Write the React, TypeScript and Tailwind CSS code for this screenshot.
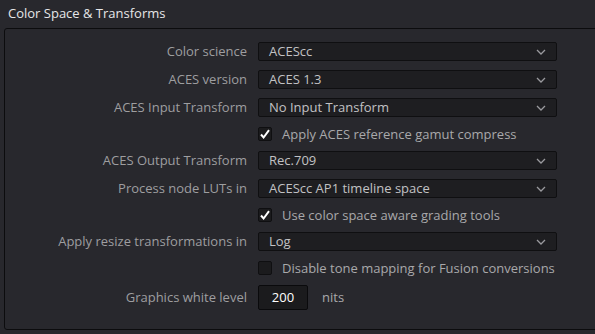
import React from 'react';

const font = { fontFamily: '"Open Sans", "Noto Sans", sans-serif' };

const Chevron = () => (
  <svg width="10" height="6" viewBox="0 0 10 6" className="shrink-0">
    <path d="M1 1 L5 5 L9 1" fill="none" stroke="#9a9a9e" strokeWidth="1.3" />
  </svg>
);

const Select = ({ value }: { value: string }) => (
  <div className="h-[19px] w-[299px] flex items-center justify-between pl-[10px] pr-[10px] bg-[#1e1e21] border border-[#0f0f11] rounded-[2px] text-[13px] text-[#c2c2c4] leading-none">
    <span>{value}</span>
    <Chevron />
  </div>
);

const Check = ({ checked, label }: { checked: boolean; label: string }) => (
  <div className="h-[16px] flex items-center gap-[10px] text-[13px] text-[#a9a9ab] leading-none">
    <div className="w-[14px] h-[14px] bg-[#1b1b1d] border border-[#0f0f11] rounded-[2px] flex items-center justify-center">
      {checked && (
        <svg width="12" height="12" viewBox="0 0 12 12">
          <path d="M2 6.5 L4.6 9.5 L10 2.2" fill="none" stroke="#ffffff" strokeWidth="2" />
        </svg>
      )}
    </div>
    <span>{label}</span>
  </div>
);

const Row = ({ label, children }: { label?: string; children: React.ReactNode }) => (
  <div className="grid grid-cols-[242px_1fr] gap-x-[11px] items-center">
    <div className="text-right text-[13px] text-[#9e9ea0] leading-none whitespace-nowrap">{label}</div>
    <div>{children}</div>
  </div>
);

export default function App() {
  return (
    <div className="w-[595px] h-[334px] bg-[#28282d] overflow-hidden" style={font}>
      <div className="h-[28px] pl-[8px] pt-[3px] text-[13px] text-[#e6e6e8] leading-[20px]">Color Space &amp; Transforms</div>
      <div className="ml-[4px] w-[620px] h-[302px] border border-[#0c0c0e] rounded-[3px] pt-[13px] flex flex-col gap-[9px]">
        <Row label="Color science"><Select value="ACEScc" /></Row>
        <Row label="ACES version"><Select value="ACES 1.3" /></Row>
        <Row label="ACES Input Transform"><Select value="No Input Transform" /></Row>
        <Row><Check checked label="Apply ACES reference gamut compress" /></Row>
        <Row label="ACES Output Transform"><Select value="Rec.709" /></Row>
        <Row label="Process node LUTs in"><Select value="ACEScc AP1 timeline space" /></Row>
        <Row><Check checked label="Use color space aware grading tools" /></Row>
        <Row label="Apply resize transformations in"><Select value="Log" /></Row>
        <Row><Check checked={false} label="Disable tone mapping for Fusion conversions" /></Row>
        <Row label="Graphics white level">
          <div className="flex items-center gap-[14px]">
            <div className="w-[50px] h-[25px] bg-[#1b1b1d] border border-[#0a0a0c] rounded-[2px] flex items-center justify-center text-[13px] text-white leading-none">200</div>
            <span className="text-[13px] text-[#a9a9ab] leading-none">nits</span>
          </div>
        </Row>
      </div>
    </div>
  );
}
